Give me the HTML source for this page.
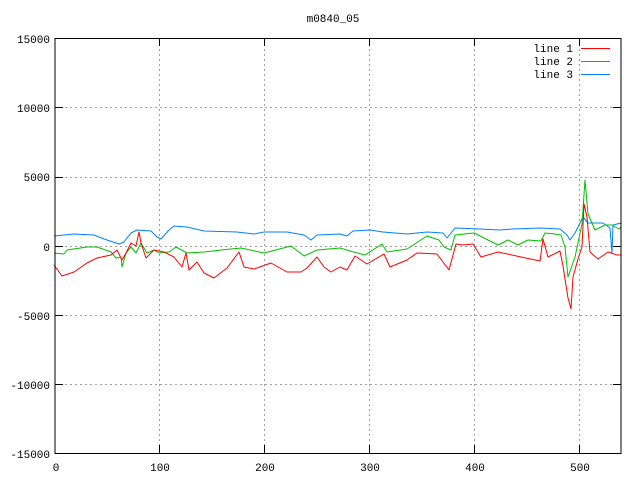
<!DOCTYPE html>
<html><head><meta charset="utf-8"><style>
html,body{margin:0;padding:0;background:#fff;width:640px;height:480px;overflow:hidden}
svg text{font-family:"Liberation Mono",monospace;font-size:11px;fill:#000}
</style></head><body>
<svg width="640" height="480" xmlns="http://www.w3.org/2000/svg" shape-rendering="crispEdges">
<rect width="640" height="480" fill="#fff"/>
<g stroke="#a0a0a0" stroke-width="1" stroke-dasharray="2,3">
<line x1="55" y1="107.5" x2="621" y2="107.5"/>
<line x1="55" y1="177.5" x2="621" y2="177.5"/>
<line x1="55" y1="246.5" x2="621" y2="246.5"/>
<line x1="55" y1="315.5" x2="621" y2="315.5"/>
<line x1="55" y1="384.5" x2="621" y2="384.5"/>
<line x1="159.5" y1="39" x2="159.5" y2="453"/>
<line x1="264.5" y1="39" x2="264.5" y2="453"/>
<line x1="369.5" y1="39" x2="369.5" y2="453"/>
<line x1="474.5" y1="39" x2="474.5" y2="453"/>
<line x1="579.5" y1="39" x2="579.5" y2="453"/>
</g>
<g stroke="#000" stroke-width="1">
<path d="M55,38.5H63M55,107.5H63M55,177.5H63M55,246.5H63M55,315.5H63M55,384.5H63M55,453.5H63"/>
<path d="M621,38.5H613M621,107.5H613M621,177.5H613M621,246.5H613M621,315.5H613M621,384.5H613M621,453.5H613"/>
<path d="M159.5,453V445M264.5,453V445M369.5,453V445M474.5,453V445M579.5,453V445"/>
<path d="M159.5,38V46M264.5,38V46M369.5,38V46M474.5,38V46M579.5,38V46"/>
</g>
<g shape-rendering="auto" fill="none" stroke-width="1" stroke-linejoin="round">
<polyline stroke="#0080ff" points="54,236 74,234 94,235 104,239 119,244 124,242 131,233 137,230 151,231 157,237 161,239 169,230 174,226 187,227 204,231 237,232 254,234 264,232 287,232 304,235 311,240 317,235 340,234 347,236 353,231 370,230 383,232 407,234 427,232 443,233 447,238 455,228 480,229 500,230 513,229 540,228 560,229 567,235 570,240 575,233 580,223 583,217 588,223 603,223 610,228 612,253 613,225 621,223"/>
<polyline stroke="#00c000" points="54,253 64,254 67,250 87,247 97,247 111,252 116,258 121,257 122,267 126,253 131,247 136,253 141,243 147,253 154,250 159,253 169,252 176,247 187,253 204,252 221,250 241,248 264,253 291,246 304,256 317,250 340,248 350,251 365,255 382,244 387,252 407,249 427,236 439,240 444,247 451,250 455,235 474,233 488,240 498,245 508,240 518,245 528,240 541,241 545,233 555,234 561,235 565,247 568,277 575,257 582,224 585,180 588,214 595,230 605,225 612,225 619,229 621,227"/>
<polyline stroke="#ff0000" points="54,265 62,276 74,272 87,263 97,258 111,255 117,250 122,260 126,253 131,243 136,246 139,232 141,243 146,258 154,250 164,252 174,257 182,267 186,253 189,270 197,262 204,273 214,278 227,268 239,252 244,267 254,269 271,263 287,272 301,272 307,268 317,257 324,267 331,272 340,267 347,270 355,256 367,264 384,254 390,267 407,260 417,253 437,254 449,270 456,244 463,245 473,244 481,257 498,252 521,257 540,261 543,239 548,257 560,251 563,266 568,298 571,309 573,277 578,259 582,247 584,204 587,217 590,252 598,259 608,252 617,255 621,255"/>
</g>
<rect x="55" y="38.5" width="566" height="415" fill="none" stroke="#000" stroke-width="1"/>
<line x1="581" y1="48.5" x2="610" y2="48.5" stroke="#ff0000"/>
<line x1="581" y1="61.5" x2="610" y2="61.5" stroke="#00c000"/>
<line x1="581" y1="74.5" x2="610" y2="74.5" stroke="#0080ff"/>
<text x="573" y="52" text-anchor="end">line 1</text>
<text x="573" y="65" text-anchor="end">line 2</text>
<text x="573" y="78" text-anchor="end">line 3</text>
<text x="333" y="22" text-anchor="middle">m0840_05</text>
<g text-anchor="end">
<text x="50" y="43">15000</text>
<text x="50" y="112">10000</text>
<text x="50" y="181">5000</text>
<text x="50" y="251">0</text>
<text x="50" y="320">-5000</text>
<text x="50" y="389">-10000</text>
<text x="50" y="458">-15000</text>
</g>
<g text-anchor="middle">
<text x="56" y="471">0</text>
<text x="160" y="471">100</text>
<text x="265" y="471">200</text>
<text x="370" y="471">300</text>
<text x="475" y="471">400</text>
<text x="580" y="471">500</text>
</g>
</svg>
</body></html>
